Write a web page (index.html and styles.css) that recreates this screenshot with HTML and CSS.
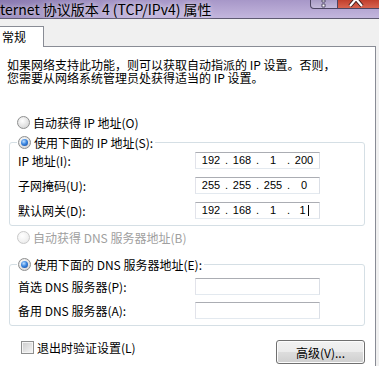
FILE: index.html
```html
<!DOCTYPE html>
<html lang="zh-CN">
<head>
  <meta charset="UTF-8">
  <meta name="viewport" content="width=device-width, initial-scale=1.0">
  <title>Internet 协议版本 4 (TCP/IPv4) 属性</title>
  <link rel="stylesheet" href="styles.css">
</head>
<body>
  <div class="window">
    <div class="titlebar">
      <span class="title">ternet 协议版本 4 (TCP/IPv4) 属性</span>
      <div class="caption-buttons">
        <span class="cap-btn help-btn">
          <svg width="27" height="9" viewBox="0 0 27 9">
            <path d="M12 0 h3 v2 h-3 z M12 4 h3 v3 h-3 z" fill="#fff" stroke="#3a3450" stroke-width="0.8"/>
          </svg>
        </span>
        <span class="cap-btn close-btn">
          <svg width="42" height="9" viewBox="0 0 42 9">
            <path d="M13 6 L19 -1 L25 6" fill="none" stroke="#3a1a1a" stroke-width="4"/>
            <path d="M13 6 L19 -1 L25 6" fill="none" stroke="#fff" stroke-width="2.2"/>
          </svg>
        </span>
      </div>
    </div>

    <div class="client">
      <div class="tabs"><span class="tab">常规</span></div>
      <div class="panel">
        <p class="intro">
          <span class="intro-line">如果网络支持此功能，则可以获取自动指派的 IP 设置。否则，</span>
          <span class="intro-line">您需要从网络系统管理员处获得适当的 IP 设置。</span>
        </p>

        <div class="option first"><span class="radio"></span>自动获得 IP 地址(O)</div>

        <fieldset class="group ip-group">
          <legend><span class="option"><span class="radio checked"></span>使用下面的 IP 地址(S):</span></legend>
          <div class="rows">
            <div class="field-row">
              <span class="field-label">IP 地址(I):</span>
              <div class="ip-box">
                <span class="oct">192</span><span class="dot">.</span><span class="oct">168</span><span class="dot">.</span><span class="oct">1</span><span class="dot">.</span><span class="oct">200</span>
              </div>
            </div>
            <div class="field-row">
              <span class="field-label">子网掩码(U):</span>
              <div class="ip-box">
                <span class="oct">255</span><span class="dot">.</span><span class="oct">255</span><span class="dot">.</span><span class="oct">255</span><span class="dot">.</span><span class="oct">0</span>
              </div>
            </div>
            <div class="field-row">
              <span class="field-label">默认网关(D):</span>
              <div class="ip-box">
                <span class="oct">192</span><span class="dot">.</span><span class="oct">168</span><span class="dot">.</span><span class="oct">1</span><span class="dot">.</span><span class="oct">1<span class="caret"></span></span>
              </div>
            </div>
          </div>
        </fieldset>

        <div class="option disabled"><span class="radio"></span>自动获得 DNS 服务器地址(B)</div>

        <fieldset class="group dns-group">
          <legend><span class="option"><span class="radio checked"></span>使用下面的 DNS 服务器地址(E):</span></legend>
          <div class="rows">
            <div class="field-row">
              <span class="field-label">首选 DNS 服务器(P):</span>
              <div class="ip-box"></div>
            </div>
            <div class="field-row">
              <span class="field-label">备用 DNS 服务器(A):</span>
              <div class="ip-box"></div>
            </div>
          </div>
        </fieldset>

        <div class="footer">
          <div class="option check-row"><span class="checkbox"></span>退出时验证设置(L)</div>
          <button class="btn">高级(V)...</button>
        </div>
      </div>
    </div>
  </div>
</body>
</html>
```

FILE: styles.css
```css
body {
  margin: 0;
  padding: 0;
  width: 379px;
  height: 366px;
  overflow: hidden;
  background-color: #f0f0f0;
  font-family: "Noto Sans CJK SC", "Noto Sans", sans-serif;
  font-size: 12px;
  color: #000;
}

/* window caption */
.titlebar {
  height: 18px;
  display: flex;
  align-items: flex-start;
  border-bottom: 1px solid #5f5a72;
  background:
    linear-gradient(to right, rgba(80, 62, 130, 0.35), rgba(80, 62, 130, 0) 35%),
    linear-gradient(to bottom, #a797c8, #c3b6dd);
}
.title {
  flex: 1;
  font-size: 14px;
  line-height: 18px;
  white-space: nowrap;
  text-shadow: 0 0 5px rgba(255, 255, 255, 0.8);
}
.caption-buttons {
  display: flex;
  width: 69px;
  height: 9px;
  flex-shrink: 0;
}
.cap-btn {
  display: block;
  height: 9px;
  box-sizing: border-box;
  overflow: hidden;
  border: 1px solid #4c4562;
  border-top: none;
}
.cap-btn svg {
  display: block;
  margin-left: -1px;
}
.help-btn {
  width: 28px;
  border-radius: 0 0 0 4px;
  background-color: #b4a8d0;
  background-image: linear-gradient(to bottom, #a99cc6, #c4badb);
}
.close-btn {
  width: 41px;
  border-left: none;
  border-right: none;
  background-color: #c84a38;
  background-image: linear-gradient(to bottom, #c13f2d, #d86350);
}

/* tab + page */
.client {
  padding-top: 7px;
}
.tabs {
  display: flex;
  margin-left: -1px;
}
.tab {
  position: relative;
  width: 45px;
  height: 21px;
  box-sizing: border-box;
  padding-left: 2px;
  line-height: 20px;
  background: #fff;
  border: 1px solid #898c95;
  border-bottom: none;
  margin-bottom: -1px;
}
.panel {
  width: 375px;
  height: 330px;
  margin-left: -1px;
  background: #fff;
  border: 1px solid #898c95;
}

.intro {
  margin: 11px 0 0 7px;
  white-space: nowrap;
}
.intro-line {
  display: block;
  height: 13px;
  line-height: 13px;
}

/* radio / checkbox rows */
.option {
  display: flex;
  align-items: center;
  gap: 3px;
  height: 13px;
  line-height: 13px;
  white-space: nowrap;
}
.option.first {
  margin: 32px 0 0 17px;
}
.option.disabled {
  margin: 5px 0 0 17px;
  color: #a0a0a0;
}
.radio {
  width: 13px;
  height: 13px;
  box-sizing: border-box;
  flex-shrink: 0;
  border-radius: 50%;
  border: 1px solid #8e8f8f;
  background: radial-gradient(circle at 40% 35%, #ffffff 0, #e8e8e8 45%, #cdcdcd 100%);
  display: flex;
  align-items: center;
  justify-content: center;
}
.radio.checked::after {
  content: "";
  width: 7px;
  height: 7px;
  border-radius: 50%;
  background: radial-gradient(circle at 40% 35%, #c0e0ff 0, #3a86e0 45%, #103f94 100%);
}
.disabled .radio {
  border-color: #c9c9c9;
  background: radial-gradient(circle at 40% 35%, #ffffff 0, #f1f1f1 60%, #e2e2e2 100%);
}

/* group boxes */
.group {
  width: 356px;
  box-sizing: border-box;
  margin: 7px 0 0 9px;
  padding: 0 0 6px;
  border: 1px solid #d5dfe5;
  border-radius: 3px;
  min-inline-size: auto;
}
.group legend {
  margin-left: 7px;
  padding: 0 2px 0 1px;
  height: 13px;
  line-height: 13px;
}
.dns-group {
  margin-top: 14px;
}
.rows {
  display: flex;
  flex-direction: column;
  gap: 8px;
  padding-top: 3px;
}
.dns-group .rows {
  gap: 7px;
  padding-top: 7px;
}
.field-row {
  display: flex;
  align-items: center;
  padding-left: 8px;
  height: 17px;
}
.field-label {
  width: 177px;
  white-space: nowrap;
}
.ip-box {
  width: 125px;
  height: 17px;
  box-sizing: border-box;
  display: flex;
  padding-left: 2px;
  border: 1px solid;
  border-color: #abadb3 #dbdfe6 #e3e9ef #e2e3ea;
  background: #fff;
  font-family: "Liberation Sans", Arial, sans-serif;
  font-size: 11px;
  line-height: 15px;
}
.oct {
  width: 26px;
  text-align: center;
}
.dot {
  width: 5px;
  text-align: center;
}
.caret {
  display: inline-block;
  width: 1px;
  height: 11px;
  margin-left: 2px;
  vertical-align: -2px;
  background: #000;
}

/* bottom row */
.footer {
  display: flex;
  align-items: flex-start;
  justify-content: space-between;
  margin: 14px 10px 0 0;
}
.check-row {
  margin: 1px 0 0 21px;
}
.checkbox {
  width: 13px;
  height: 13px;
  box-sizing: border-box;
  flex-shrink: 0;
  border: 1px solid #8e8f8f;
  box-shadow: inset 0 0 0 1px #f4f4f4;
  background: linear-gradient(135deg, #cbcbcb, #f7f7f7);
}
.btn {
  width: 89px;
  height: 24px;
  padding: 0;
  border: 1px solid #707070;
  border-radius: 3px;
  box-shadow: inset 0 0 0 1px #fcfcfc;
  background: linear-gradient(to bottom, #f2f2f2 0%, #ebebeb 50%, #dddddd 51%, #cfcfcf 100%);
  font-family: "Noto Sans CJK SC", "Noto Sans", sans-serif;
  font-size: 12px;
  color: #000;
}
```
